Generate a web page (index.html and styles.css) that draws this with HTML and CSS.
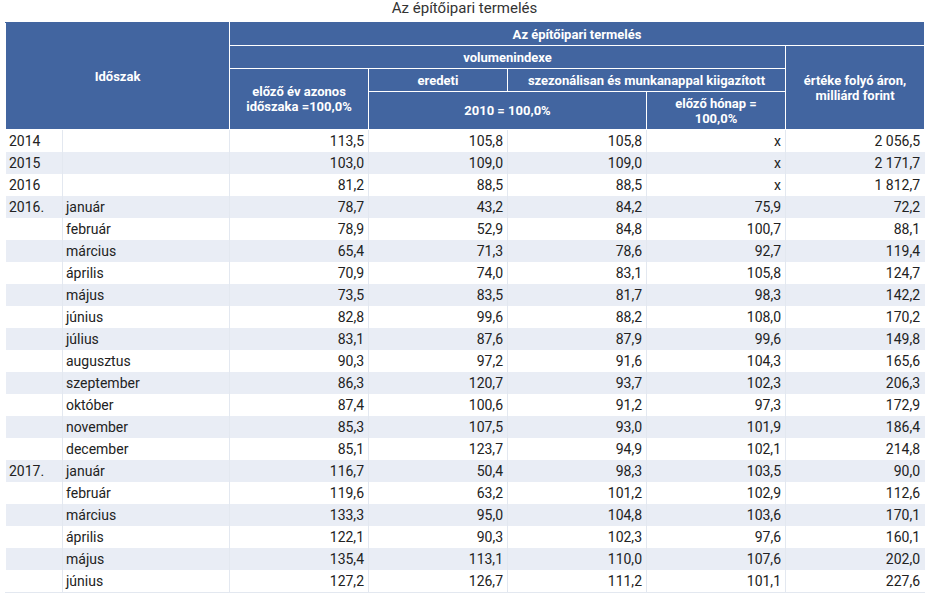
FILE: index.html
```html
<!DOCTYPE html>
<html lang="hu">
<head>
<meta charset="utf-8">
<title>Az építőipari termelés</title>
<link rel="stylesheet" href="styles.css">
</head>
<body>
<h1 class="title">Az építőipari termelés</h1>
<table class="data">
  <colgroup>
    <col class="c-year"><col class="c-month"><col class="c-num"><col class="c-num"><col class="c-num"><col class="c-num"><col class="c-num">
  </colgroup>
  <thead>
    <tr class="h1">
      <th colspan="2" rowspan="4">Időszak</th>
      <th colspan="5">Az építőipari termelés</th>
    </tr>
    <tr class="h2">
      <th colspan="4">volumenindexe</th>
      <th rowspan="3">értéke folyó áron,<br>milliárd forint</th>
    </tr>
    <tr class="h3">
      <th rowspan="2">előző év azonos<br>időszaka =100,0%</th>
      <th>eredeti</th>
      <th colspan="2">szezonálisan és munkanappal kiigazított</th>
    </tr>
    <tr class="h4">
      <th colspan="2">2010 = 100,0%</th>
      <th>előző hónap =<br>100,0%</th>
    </tr>
  </thead>
  <tbody>
    <tr><td>2014</td><td></td><td class="n">113,5</td><td class="n">105,8</td><td class="n">105,8</td><td class="n">x</td><td class="n">2 056,5</td></tr>
    <tr><td>2015</td><td></td><td class="n">103,0</td><td class="n">109,0</td><td class="n">109,0</td><td class="n">x</td><td class="n">2 171,7</td></tr>
    <tr><td>2016</td><td></td><td class="n">81,2</td><td class="n">88,5</td><td class="n">88,5</td><td class="n">x</td><td class="n">1 812,7</td></tr>
    <tr><td>2016.</td><td>január</td><td class="n">78,7</td><td class="n">43,2</td><td class="n">84,2</td><td class="n">75,9</td><td class="n">72,2</td></tr>
    <tr><td></td><td>február</td><td class="n">78,9</td><td class="n">52,9</td><td class="n">84,8</td><td class="n">100,7</td><td class="n">88,1</td></tr>
    <tr><td></td><td>március</td><td class="n">65,4</td><td class="n">71,3</td><td class="n">78,6</td><td class="n">92,7</td><td class="n">119,4</td></tr>
    <tr><td></td><td>április</td><td class="n">70,9</td><td class="n">74,0</td><td class="n">83,1</td><td class="n">105,8</td><td class="n">124,7</td></tr>
    <tr><td></td><td>május</td><td class="n">73,5</td><td class="n">83,5</td><td class="n">81,7</td><td class="n">98,3</td><td class="n">142,2</td></tr>
    <tr><td></td><td>június</td><td class="n">82,8</td><td class="n">99,6</td><td class="n">88,2</td><td class="n">108,0</td><td class="n">170,2</td></tr>
    <tr><td></td><td>július</td><td class="n">83,1</td><td class="n">87,6</td><td class="n">87,9</td><td class="n">99,6</td><td class="n">149,8</td></tr>
    <tr><td></td><td>augusztus</td><td class="n">90,3</td><td class="n">97,2</td><td class="n">91,6</td><td class="n">104,3</td><td class="n">165,6</td></tr>
    <tr><td></td><td>szeptember</td><td class="n">86,3</td><td class="n">120,7</td><td class="n">93,7</td><td class="n">102,3</td><td class="n">206,3</td></tr>
    <tr><td></td><td>október</td><td class="n">87,4</td><td class="n">100,6</td><td class="n">91,2</td><td class="n">97,3</td><td class="n">172,9</td></tr>
    <tr><td></td><td>november</td><td class="n">85,3</td><td class="n">107,5</td><td class="n">93,0</td><td class="n">101,9</td><td class="n">186,4</td></tr>
    <tr><td></td><td>december</td><td class="n">85,1</td><td class="n">123,7</td><td class="n">94,9</td><td class="n">102,1</td><td class="n">214,8</td></tr>
    <tr><td>2017.</td><td>január</td><td class="n">116,7</td><td class="n">50,4</td><td class="n">98,3</td><td class="n">103,5</td><td class="n">90,0</td></tr>
    <tr><td></td><td>február</td><td class="n">119,6</td><td class="n">63,2</td><td class="n">101,2</td><td class="n">102,9</td><td class="n">112,6</td></tr>
    <tr><td></td><td>március</td><td class="n">133,3</td><td class="n">95,0</td><td class="n">104,8</td><td class="n">103,6</td><td class="n">170,1</td></tr>
    <tr><td></td><td>április</td><td class="n">122,1</td><td class="n">90,3</td><td class="n">102,3</td><td class="n">97,6</td><td class="n">160,1</td></tr>
    <tr><td></td><td>május</td><td class="n">135,4</td><td class="n">113,1</td><td class="n">110,0</td><td class="n">107,6</td><td class="n">202,0</td></tr>
    <tr><td></td><td>június</td><td class="n">127,2</td><td class="n">126,7</td><td class="n">111,2</td><td class="n">101,1</td><td class="n">227,6</td></tr>
  </tbody>
</table>
</body>
</html>
```

FILE: styles.css
```css
html, body {
  margin: 0;
  padding: 0;
  background: #ffffff;
}

body {
  font-family: Roboto, "Liberation Sans", Arial, sans-serif;
  color: #222222;
}

.title {
  margin: 0;
  height: 22px;
  font-size: 15px;
  line-height: 17px;
  font-weight: 400;
  text-align: center;
  color: #333333;
}

.data {
  margin-left: 5px;
  width: 919px;
  border-collapse: collapse;
  table-layout: fixed;
  font-size: 14px;
}

.c-year { width: 57px; }
.c-month { width: 167px; }
.c-num { width: 139px; }

.data th {
  background: #4265a0;
  color: #ffffff;
  font-weight: 700;
  font-size: 13px;
  line-height: 15px;
  text-align: center;
  vertical-align: middle;
  border: 1px solid #ffffff;
  padding: 0 2px;
}

.data thead tr.h1 th,
.data thead tr.h2 th,
.data thead tr.h3 th {
  height: 22px;
}

.data thead tr.h4 th {
  height: 37px;
}

.data thead tr.h1 th { border-top-color: #4265a0; }

.data tbody tr {
  height: 22px;
}

.data tbody tr:nth-child(even) {
  background: #e9edf5;
}

.data td {
  padding: 0 4px 0 3px;
  height: 22px;
  line-height: 16px;
  border-left: 1px solid #e3e8f0;
  border-right: 1px solid #e3e8f0;
  white-space: nowrap;
}

.data td:first-child {
  border-left-color: transparent;
}

.data td:last-child {
  border-right-color: transparent;
}

.data td.n {
  text-align: right;
}

.data tbody tr:last-child td {
  border-bottom: 1px solid #e3e8f0;
}
```
